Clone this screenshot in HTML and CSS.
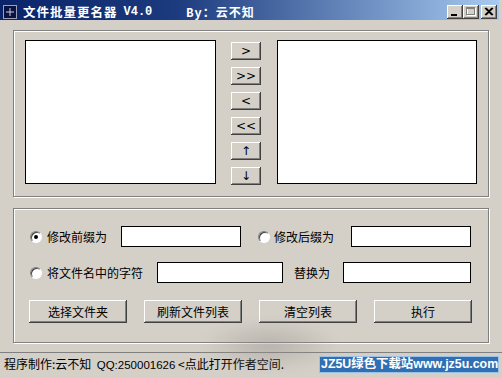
FILE: index.html
```html
<!DOCTYPE html>
<html lang="zh-CN">
<head>
    <meta charset="UTF-8">
    <title>文件批量更名器 V4.0</title>
    <link rel="stylesheet" href="styles.css">
</head>
<body>
    <div class="window">
        <div class="titlebar">
            <svg class="app-icon" width="14" height="14" viewBox="0 0 14 14">
                <rect x="0.5" y="0.5" width="13" height="13" fill="#0b1240" stroke="#9aa0b8"/>
                <path d="M7 3v8M3 7h8" stroke="#c8cce0" stroke-width="1"/>
            </svg>
            <span class="title">文件批量更名器</span>
            <span class="ver">V4.0</span>
            <span class="by">By：云不知</span>
            <div class="caption-btns">
                <div class="cap-btn">
                    <svg width="16" height="14" viewBox="0 0 16 14"><rect x="4" y="9" width="6" height="2" fill="#000"/></svg>
                </div>
                <div class="cap-btn">
                    <svg width="16" height="14" viewBox="0 0 16 14">
                        <rect x="4.5" y="3.5" width="8" height="7" fill="none" stroke="#fff"/>
                        <rect x="3.5" y="2.5" width="8" height="7" fill="none" stroke="#808080"/>
                        <rect x="3" y="2" width="9" height="2" fill="#808080"/>
                    </svg>
                </div>
                <div class="cap-btn close">
                    <svg width="16" height="14" viewBox="0 0 16 14"><path d="M4 3l7 7M11 3l-7 7M5 3l7 7M12 3l-7 7" stroke="#000" stroke-width="1.2"/></svg>
                </div>
            </div>
        </div>

        <div class="client">
            <div class="group group-lists">
                <div class="listbox list-left"></div>
                <div class="move-btns">
                    <button class="btn small">&gt;</button>
                    <button class="btn small">&gt;&gt;</button>
                    <button class="btn small">&lt;</button>
                    <button class="btn small">&lt;&lt;</button>
                    <button class="btn small">↑</button>
                    <button class="btn small">↓</button>
                </div>
                <div class="listbox list-right"></div>
            </div>

            <div class="group group-opts">
                <div class="row">
                    <span class="radio checked"></span>
                    <span class="label">修改前缀为</span>
                    <span class="textbox tb-prefix"></span>
                    <span class="radio radio-suffix"></span>
                    <span class="label">修改后缀为</span>
                    <span class="textbox tb-suffix"></span>
                </div>
                <div class="row row-replace">
                    <span class="radio"></span>
                    <span class="label">将文件名中的字符</span>
                    <span class="textbox tb-find"></span>
                    <span class="label label-plain">替换为</span>
                    <span class="textbox tb-repl"></span>
                </div>
                <div class="btn-row">
                    <button class="btn wide">选择文件夹</button>
                    <button class="btn wide">刷新文件列表</button>
                    <button class="btn wide">清空列表</button>
                    <button class="btn wide">执行</button>
                </div>
            </div>
        </div>

        <div class="statusbar">程序制作:云不知&nbsp; <span class="qq">QQ:250001626</span> &lt;点此打开作者空间.</div>

        <div class="smudge"></div>
        <div class="watermark">JZ5U绿色下载站www.jz5u.com</div>
    </div>
</body>
</html>
```

FILE: styles.css
```css
body {
    margin: 0;
    background-color: #d4d0c8;
    font-family: "Noto Sans CJK SC", "Liberation Sans", sans-serif;
    font-size: 12px;
    color: #000;
}
.window {
    position: relative;
    width: 502px;
    height: 378px;
    background: #d4d0c8;
    overflow: hidden;
}
.titlebar {
    display: flex;
    align-items: center;
    width: 499px;
    height: 20px;
    background: linear-gradient(to right, #0a246a, #1c3a7e 35%, #a6caf0);
    color: #fff;
    font-weight: bold;
    box-sizing: border-box;
    padding-top: 3px;
}
.app-icon {
    margin-left: 3px;
    flex: none;
}
.title {
    margin-left: 6px;
    letter-spacing: 1px;
    line-height: 14px;
    font-size: 12.5px;
}
.ver {
    margin-left: 6px;
    font-family: "Liberation Mono", monospace;
    font-size: 12px;
}
.by {
    margin-left: 34px;
    font-family: "Liberation Mono", "Noto Sans CJK SC", monospace;
    letter-spacing: 1px;
}
.caption-btns {
    margin-left: auto;
    display: flex;
    margin-right: 2px;
}
.cap-btn {
    width: 16px;
    height: 14px;
    background: #d4d0c8;
    box-sizing: border-box;
    box-shadow: inset -1px -1px #404040, inset 1px 1px #fff, inset -2px -2px #808080;
}
.cap-btn svg {
    display: block;
}
.cap-btn.close {
    margin-left: 2px;
}
.client {
    padding: 10px 0 0 13px;
}
.group {
    box-sizing: border-box;
    width: 476px;
    border: 1px solid #808080;
    box-shadow: 1px 1px 0 #fff, inset 1px 1px 0 #fff;
}
.group-lists {
    display: flex;
    align-items: flex-start;
    height: 167px;
    padding: 9px 0 0 11px;
}
.listbox {
    box-sizing: border-box;
    height: 144px;
    background: #fff;
    border: 1px solid #000;
}
.list-left {
    width: 191px;
}
.list-right {
    width: 200px;
    margin-left: 16px;
}
.move-btns {
    display: flex;
    flex-direction: column;
    gap: 7px;
    margin-left: 15px;
    padding-top: 2px;
}
.btn {
    box-sizing: border-box;
    background: #d4d0c8;
    border: none;
    padding: 0;
    font-family: "Noto Sans CJK SC", "Liberation Sans", sans-serif;
    font-size: 12px;
    color: #000;
    box-shadow: inset -1px -1px #404040, inset 1px 1px #fff, inset -2px -2px #808080;
}
.btn.small {
    width: 30px;
    height: 18px;
    font-family: "DejaVu Sans", sans-serif;
    font-size: 12px;
    line-height: 16px;
}
.group-opts {
    height: 135px;
    margin-top: 11px;
    padding: 17px 0 0 15px;
}
.row {
    display: flex;
    align-items: center;
    height: 21px;
}
.row-replace {
    margin-top: 15px;
}
.radio {
    position: relative;
    box-sizing: border-box;
    width: 12px;
    height: 12px;
    margin-left: 1px;
    border-radius: 50%;
    background: #fff;
    border: 1px solid;
    border-color: #808080 #fff #fff #808080;
    box-shadow: inset 1px 1px #404040;
    flex: none;
}
.radio.checked::after {
    content: "";
    position: absolute;
    left: 3px;
    top: 3px;
    width: 4px;
    height: 4px;
    border-radius: 50%;
    background: #000;
}
.radio-suffix {
    margin-left: 17px;
}
.label {
    margin-left: 5px;
    white-space: nowrap;
    line-height: 14px;
}
.radio-suffix + .label {
    margin-left: 4px;
}
.label-plain {
    margin-left: 11px;
}
.textbox {
    box-sizing: border-box;
    height: 21px;
    background: #fff;
    border: 1px solid #000;
    margin-left: 14px;
    flex: none;
}
.tb-prefix { width: 120px; }
.tb-suffix { width: 120px; margin-left: 17px; }
.tb-find { width: 126px; }
.tb-repl { width: 128px; margin-left: 13px; }
.btn-row {
    display: flex;
    gap: 17px;
    margin-top: 17px;
}
.btn.wide {
    width: 98px;
    height: 23px;
}
.statusbar {
    box-sizing: border-box;
    margin-top: 9px;
    height: 25px;
    padding: 3px 0 0 4px;
    border-top: 1px solid #808080;
    white-space: nowrap;
    line-height: 16px;
}
.qq {
    font-family: "Liberation Sans", sans-serif;
    font-size: 11.5px;
}
.smudge {
    position: absolute;
    left: 200px;
    top: 318px;
    width: 140px;
    height: 55px;
    background: radial-gradient(ellipse at center, rgba(150, 146, 140, 0.45), rgba(212, 208, 200, 0) 70%);
    filter: blur(3px);
}
.watermark {
    position: absolute;
    left: 319px;
    top: 356px;
    width: 180px;
    height: 17px;
    box-sizing: border-box;
    background: #2f6fb3;
    border: 1px solid #9cc0e6;
    color: #fff;
    font-family: "Liberation Sans", "Noto Sans CJK SC", sans-serif;
    font-weight: bold;
    font-size: 12.4px;
    line-height: 15px;
    white-space: nowrap;
    padding-left: 1px;
}
```
